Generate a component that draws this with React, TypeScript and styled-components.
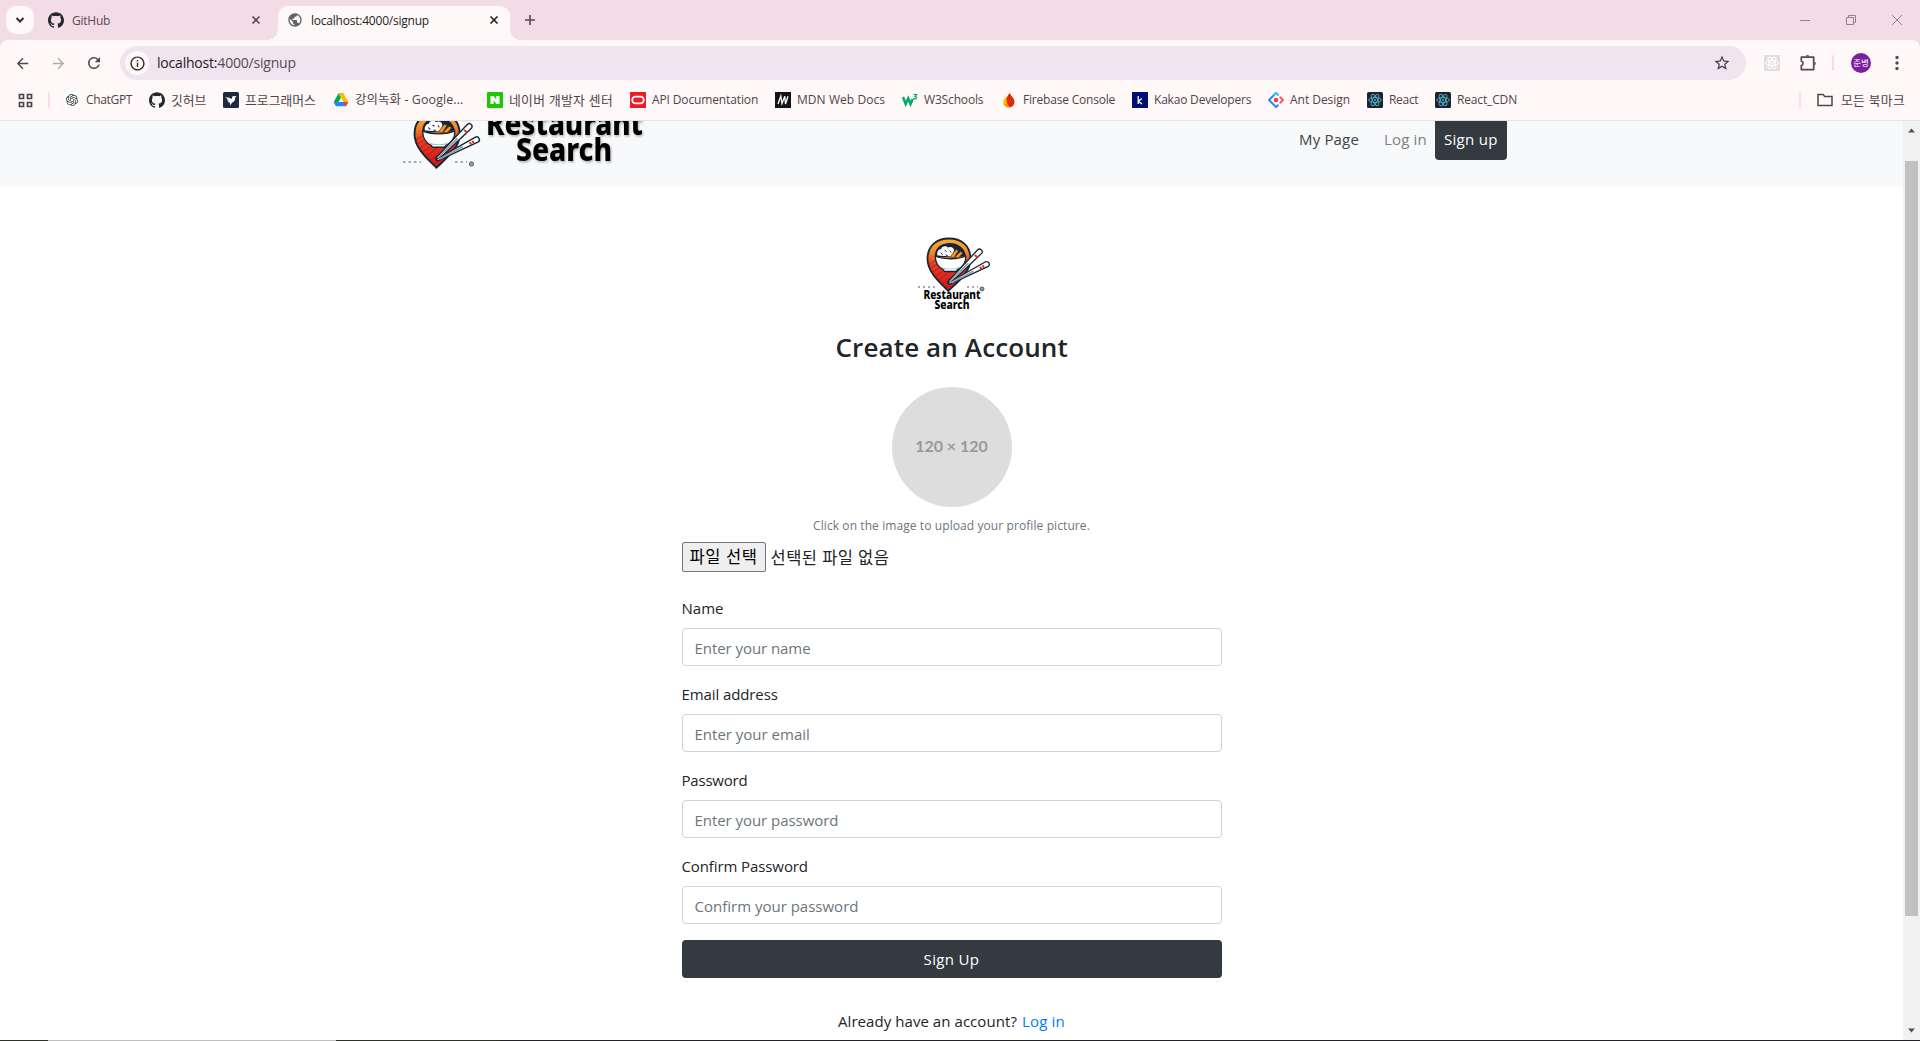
import React from "react";
import styled, { createGlobalStyle } from "styled-components";
import { SiGithub, SiOpenai } from "react-icons/si";
import { MdPublic, MdArrowBack, MdArrowForward, MdRefresh, MdInfoOutline, MdStarOutline } from "react-icons/md";

const ui = `"Open Sans", "Noto Sans CJK KR", sans-serif`;

const Global = createGlobalStyle`
  * { box-sizing: border-box; }
  body { margin: 0; overflow: hidden; background: #fff; font-family: ${ui}; }
`;

const Screen = styled.div`
  width: 1920px;
  height: 1041px;
  display: flex;
  flex-direction: column;
  overflow: hidden;
`;

const Text = styled.span<{ $w: number; $ls?: number; $size?: number }>`
  display: inline-block;
  flex: none;
  width: ${(p) => p.$w}px;
  letter-spacing: ${(p) => p.$ls ?? 0}px;
  ${(p) => (p.$size ? `font-size: ${p.$size}px;` : "")}
  white-space: nowrap;
`;

/* ---------- tab strip ---------- */

const TabStrip = styled.div`
  height: 40px;
  flex: none;
  display: flex;
  background: #f2dce5;
  padding: 6px 0 0 6px;
`;
const TabSearch = styled.div`
  width: 28px;
  height: 28px;
  border-radius: 10px;
  background: #fff8f8;
  display: grid;
  place-items: center;
`;
const Tab = styled.div<{ $active?: boolean; $w: number }>`
  position: relative;
  width: ${(p) => p.$w}px;
  height: 34px;
  padding: 0 9px 6px 9px;
  display: flex;
  align-items: center;
  font-size: 12px;
  color: ${(p) => (p.$active ? "#241d20" : "#5d4a53")};
  background: ${(p) => (p.$active ? "#fff8f8" : "transparent")};
  border-radius: 10px 10px 0 0;
  svg { flex: none; }
  & > span { margin-left: 8px; padding-top: 1px; }
  & > svg:last-of-type { margin-left: auto; }
`;
const Flare = styled.i<{ $side: "left" | "right" }>`
  position: absolute;
  bottom: 0;
  ${(p) => p.$side}: -10px;
  width: 10px;
  height: 10px;
  background: radial-gradient(circle at ${(p) => (p.$side === "left" ? "0 0" : "100% 0")}, transparent 9.5px, #fff8f8 10px);
`;
const NewTab = styled.div`
  width: 28px;
  height: 28px;
  margin-left: 6px;
  display: grid;
  place-items: center;
`;
const WindowButtons = styled.div`
  margin-left: auto;
  height: 28px;
  display: flex;
  svg { width: 46px; height: 28px; }
`;

/* ---------- toolbar ---------- */

const ToolbarBack = styled.div`
  flex: none;
  background: #f2dce5;
`;
const Toolbar = styled.div`
  height: 40px;
  border-radius: 8px 8px 0 0;
  background: #fff8f8;
  display: flex;
  align-items: center;
  padding: 6px 14px 0 13px;
  color: #5b4650;
`;
const NavIcon = styled.div<{ $dim?: boolean }>`
  width: 18px;
  height: 18px;
  margin-right: 18px;
  display: grid;
  place-items: center;
  color: ${(p) => (p.$dim ? "#b3a8ac" : "#5b4650")};
`;
const Omnibox = styled.div`
  width: 1626px;
  height: 34px;
  margin-left: -1px;
  border-radius: 17px;
  background: #f0e4ee;
  display: flex;
  align-items: center;
  padding: 0 15px 0 5px;
  font-size: 14px;
  color: #5a4b54;
  span { padding-bottom: 1px; }
  b { font-weight: 400; color: #1f1a1d; }
  & > svg { margin-left: auto; color: #463a41; }
`;
const SiteInfo = styled.div`
  width: 24px;
  height: 24px;
  border-radius: 50%;
  background: #fff8f8;
  display: grid;
  place-items: center;
  margin-right: 8px;
  color: #33292e;
`;
const Divider = styled.div`
  width: 2px;
  height: 16px;
  flex: none;
  border-radius: 1px;
  background: #ffd8ec;
`;
const Actions = styled.div`
  margin-left: 18px;
  flex: none;
  display: flex;
  align-items: center;
  & > * { flex: none; }
`;
const ExtIcon = styled.div`
  width: 16px;
  height: 16px;
  background: #e3dedf;
  margin-right: 19px;
  svg { display: block; }
`;
const Avatar = styled.div`
  width: 20px;
  height: 20px;
  border-radius: 50%;
  background: #7b1fa2;
  color: #fff;
  font-size: 8.5px;
  line-height: 19px;
  text-align: center;
  margin: 0 24px 0 17px;
`;

/* ---------- bookmarks ---------- */

const Bookmarks = styled.div`
  height: 41px;
  flex: none;
  border-bottom: 1px solid #f2dce5;
  background: #fff8f8;
  display: flex;
  align-items: center;
  padding: 0 15px 0 18px;
  font-size: 12px;
  line-height: 16px;
  color: #51434a;
`;
const Bookmark = styled.div`
  display: flex;
  align-items: center;
  gap: 6px;
  margin-right: 17px;
  svg { flex: none; display: block; }
`;
const Spacer = styled.div<{ $w?: number }>`
  ${(p) => (p.$w ? `width: ${p.$w}px; flex: none;` : "flex: 1;")}
`;

/* ---------- page ---------- */

const Viewport = styled.div`
  height: 919px;
  flex: none;
  display: flex;
`;
const Page = styled.div`
  width: 1903px;
  height: 919px;
  overflow: hidden;
  color: #212529;
  font-size: 15px;
`;
const Navbar = styled.div`
  height: 65px;
  background: #f8f9fa;
  padding: 0 396px 0 401px;
  display: flex;
  align-items: flex-start;
`;
const NavLinks = styled.div`
  margin-left: auto;
  display: flex;
  line-height: 24px;
`;
const NavLink = styled.a<{ $color: string; $gap: number }>`
  padding-top: 6px;
  color: ${(p) => p.$color};
  margin-right: ${(p) => p.$gap}px;
`;
const NavButton = styled.a`
  width: 72px;
  height: 39px;
  padding: 6px 0 0 9px;
  background: #343a40;
  color: #fff;
  border-radius: 0 0 4px 4px;
`;
const Form = styled.form`
  width: 540px;
  margin: 0 auto;
  padding-top: 50px;
  display: flex;
  flex-direction: column;
  align-items: center;
`;
const Title = styled.h2`
  margin: 14px 0 23px;
  font-size: 26px;
  line-height: 34px;
  font-weight: 600;
`;
const Picture = styled.div`
  width: 120px;
  height: 120px;
  border-radius: 50%;
  background: #ddd;
  color: #999;
  font: 700 16px/118px Lato, sans-serif;
  text-align: center;
`;
const Hint = styled.small`
  margin-top: 9px;
  font-size: 12px;
  line-height: 20px;
  color: #6c757d;
`;
const FileRow = styled.div`
  width: 100%;
  height: 30px;
  margin: 6px 0 24px;
  display: flex;
  align-items: center;
  gap: 5px;
  line-height: 27px;
`;
const FileButton = styled.div`
  width: 84px;
  height: 30px;
  padding-left: 7px;
  border: 1px solid #767676;
  border-radius: 2px;
  background: #efefef;
  color: #000;
`;
const Field = styled.div`
  width: 100%;
  height: 86px;
  display: flex;
  flex-direction: column;
`;
const FieldLabel = styled.label`
  height: 32px;
  line-height: 24px;
`;
const FieldBox = styled.div`
  height: 38px;
  border: 1px solid #ced4da;
  border-radius: 4px;
  padding: 0 12px;
  line-height: 38px;
  color: #6c757d;
`;
const Submit = styled.div`
  width: 100%;
  height: 38px;
  border-radius: 4px;
  background: #343a40;
  color: #fff;
  line-height: 38px;
  text-align: center;
`;
const Footer = styled.div`
  margin-top: 31px;
  line-height: 24px;
  display: flex;
  gap: 5px;
  a { color: #007bff; }
`;
const Scrollbar = styled.div`
  width: 17px;
  background: #f1f1f1;
  display: flex;
  flex-direction: column;
  align-items: center;
  padding: 6px 0;
  svg { display: block; flex: none; }
`;
const Thumb = styled.div`
  width: 13px;
  height: 755px;
  flex: none;
  margin: 28px 0 112px;
  background: #c1c1c1;
`;
const Edge = styled.div`
  height: 1px;
  background: linear-gradient(90deg, #2c3122 0 48px, #c0c0c0 48px 336px, #2c3122 336px 500px, #242428 500px);
`;

/* ---------- drawings ---------- */

const Cross = ({ color }: { color: string }) => (
  <svg width="14" height="14" viewBox="0 0 14 14" stroke={color} strokeWidth="1.6"><path d="M3.5 3.5l7 7M10.5 3.5l-7 7" /></svg>
);

const Pin = () => (
  <g strokeLinejoin="round" strokeLinecap="round">
    <path d="M31.300 54.500C24 47 10.500 36 10.500 22.500C10.500 9 20 2 32 2S53.500 9 53.500 22.500C53.500 36 40 46 31.300 54.500Z" fill="url(#pinFill)" stroke="#14263a" strokeWidth="1.800" />
    <g stroke="#a3120f" strokeWidth=".9" opacity=".65"><path d="M12 28l6-4M13 32l8-5M15 36l9-6M18 40l12-8M21 44l12-9M25 48l9-7M29 51l6-5" /></g>
    <path d="M18 21C17 14 22 7.500 29 7c9-2 19 3 20 13z" fill="#14263a" />
    <path d="M20.500 19c-1-3 .5-6 3.500-6.500 1-3 5-3.500 7-1.500 3-1.500 6 0 6 3l-2 6z" fill="#fff" />
    <path d="M24 16.500l1.200 1.300M28 14l1.200.8M29 18.500l1.400.6M33 14.500l.8 1.200" stroke="#14263a" strokeWidth="1" />
    <path d="M33.500 20l5.500-7 2.500 1.200-4.500 6.800zM38 20.500l5.500-5.500 2.300 1.500-4.300 5z" fill="#f7971c" stroke="#5b3212" strokeWidth=".7" />
    <path d="M18.300 19.500c7 3.500 23 3.800 30.500 0 .6 6.500-3.500 12-8.500 13.800l-1 1.700H27.500l-1-1.700c-5-2-8.500-7.300-8.200-13.800z" fill="#fff" stroke="#14263a" strokeWidth="1.300" />
    <path d="M23 29.500c5 3.300 15.500 3.500 21 0-2 2-3.500 3-4.700 3.300H27.500c-2-.6-3.500-2-4.500-3.300z" fill="#b9c1c6" />
    <path d="M30.800 45.300L60.700 13.300a2.700 2.700 0 0 1 4.200 3.300L33.500 46.500z" fill="#fff" stroke="#14263a" strokeWidth="1.300" />
    <path d="M30.600 46.800L68.600 25.300a2.700 2.700 0 0 1 2.700 4.600L33 47.700z" fill="#fff" stroke="#14263a" strokeWidth="1.300" />
    <path d="M33 45L51 27M35 46L56 34.800" stroke="#8d979e" strokeWidth="1.500" />
    <path d="M57.800 18.500l2.800 2.500M63 30.200l1.600 2.400M65.500 28.900l1.500 2.300" stroke="#d63a22" strokeWidth="2" strokeLinecap="butt" />
  </g>
);

const LogoDefs = () => (
  <defs>
    <linearGradient id="pinFill" x1="0" y1="0" x2="0" y2="1">
      <stop offset="0" stopColor="#f9b02c" /><stop offset=".25" stopColor="#f58a2a" /><stop offset=".5" stopColor="#ea3a22" /><stop offset="1" stopColor="#cc161a" />
    </linearGradient>
    <filter id="soft" x="-10%" y="-10%" width="120%" height="130%"><feDropShadow dx="1" dy="1.500" stdDeviation="1" floodColor="#000" floodOpacity=".3" /></filter>
  </defs>
);

const BigLogo = () => (
  <svg width="250" height="65" viewBox="401 121 250 65">
    <LogoDefs />
    <g transform="translate(403.500 110.500) scale(1.05)"><Pin /></g>
    <path d="M403 162h18M455 162h12" stroke="#555" strokeWidth="1.200" strokeDasharray="2.500 3" />
    <circle cx="471.500" cy="164" r="2.200" fill="#999" stroke="#555" strokeWidth=".8" />
    <g fontFamily="Noto Sans" fontWeight="800" fontSize="32" filter="url(#soft)">
      <text x="486" y="134.500" textLength="157" lengthAdjust="spacingAndGlyphs">Restaurant</text>
      <text x="516" y="161" textLength="96" lengthAdjust="spacingAndGlyphs">Search</text>
    </g>
  </svg>
);

const SmallLogo = () => (
  <svg width="80" height="80" viewBox="912 236 80 80">
    <g transform="translate(917 236.500)"><Pin /></g>
    <path d="M918 287h17M967 287h11" stroke="#555" strokeWidth="1.100" strokeDasharray="2 3" />
    <circle cx="982" cy="289" r="2" fill="#999" stroke="#444" strokeWidth=".8" />
    <g fontFamily="Noto Sans" fontWeight="800" fontSize="11.500">
      <text x="923.500" y="299" textLength="57" lengthAdjust="spacingAndGlyphs">Restaurant</text>
      <text x="934.500" y="309" textLength="35" lengthAdjust="spacingAndGlyphs">Search</text>
    </g>
  </svg>
);

const ReactOrbit = ({ color, width = 1 }: { color: string; width?: number }) => (
  <g fill="none" stroke={color} strokeWidth={width}>
    <ellipse cx="8" cy="8" rx="6.300" ry="2.500" />
    <ellipse cx="8" cy="8" rx="6.300" ry="2.500" transform="rotate(60 8 8)" />
    <ellipse cx="8" cy="8" rx="6.300" ry="2.500" transform="rotate(120 8 8)" />
    <circle cx="8" cy="8" r="1" fill={color} stroke="none" />
  </g>
);

const Box16 = ({ children }: { children: React.ReactNode }) => <svg width="16" height="16" viewBox="0 0 16 16">{children}</svg>;

const icons: Record<string, React.ReactNode> = {
  gpt: <Box16><rect width="16" height="16" rx="2" fill="#fff" /><g transform="translate(2 2)"><SiOpenai size={12} color="#333" /></g></Box16>,
  github: <SiGithub size={16} color="#24292f" />,
  prog: <Box16><rect width="16" height="16" rx="1.500" fill="#1e2a3e" /><path d="M2.200 5l3.800.8 2.500 1.200L9.500 4.300l4.300-.3-1.600 1.200c.3 3-1.200 4.800-3.200 5.300L7.300 13.500l-.5-3-2.300-.5 1.300-1.300-2-.8 1-.6z" fill="#fff" /></Box16>,
  drive: <Box16><path d="M5.500 1.500h5l-2.500 4.500z" fill="#188038" /><path d="M5.500 1.500L8 6 3.200 14.300 .700 10z" fill="#00ac47" /><path d="M10.500 1.500L15.300 10H10.300L5.500 1.500z" fill="#ffba00" /><path d="M.700 10h14.600l-2.500 4.300H3.200z" fill="#2684fc" /><path d="M10.300 10h5l-2.500 4.300z" fill="#ea4335" /><path d="M8 6l2.300 4H5.700z" fill="#fff8f8" /></Box16>,
  naver: <Box16><rect width="16" height="16" rx="1" fill="#1ec800" /><path d="M3.500 4h3.200l2.600 3.800V4h3.200v8H9.300L6.700 8.200V12H3.500z" fill="#fff" /></Box16>,
  oracle: <Box16><rect width="16" height="16" fill="#ee1b24" /><rect x="2.200" y="4.700" width="11.600" height="6.600" rx="3.300" fill="none" stroke="#fff" strokeWidth="1.800" /></Box16>,
  mdn: <Box16><rect width="16" height="16" fill="#15141a" /><path d="M3 12L5.800 4.200 7 11.500 9.800 4.200 10.500 12 13 4.200" stroke="#fff" strokeWidth="1.300" fill="none" /></Box16>,
  w3: <Box16><path d="M1 5l2.700 7L6.200 6.500 8.500 12l2.200-5" stroke="#04aa6d" strokeWidth="2.500" fill="none" /><path d="M11.500 2.500h3L13 4.300c2 0 2 2.500 0 2.500-.8 0-1.400-.3-1.600-.8" stroke="#04aa6d" strokeWidth="1.200" fill="none" /></Box16>,
  fire: <Box16><path d="M5.500 4.500C3 7 2 8.500 2.200 10.800 2.500 13.500 5 15.500 8 15.500V8z" fill="#ffc400" /><path d="M8.700 1C7 3 5.500 5 5.500 8.500c0 3 1.500 5 3 7 3-.5 5-2.500 5-5.500 0-3.500-3-5.500-4.800-9z" fill="#dd2c00" /><path d="M2.500 11.500c1 3 3.500 4 6 4-.5-2.500-3-4-6-4z" fill="#ff9100" /></Box16>,
  kakao: <Box16><rect width="16" height="16" fill="#000f78" /><path d="M6.200 4v8M9.800 6.500L6.500 9.300 10 12" stroke="#fff" strokeWidth="1.300" fill="none" /></Box16>,
  ant: <Box16><path d="M10.500 3.200L8 1 1 8l7 7 2.500-2.200" fill="none" stroke="#2f8bff" strokeWidth="2" strokeLinejoin="round" /><path d="M10.500 3.200L8 1 5.500 3.500" fill="none" stroke="#3cc8f4" strokeWidth="2" strokeLinejoin="round" /><path d="M12.300 5.200L15 8l-2.700 2.800" fill="none" stroke="#fa5a6a" strokeWidth="2" strokeLinecap="round" strokeLinejoin="round" /><circle cx="8" cy="8" r="2.200" fill="#f5384f" /></Box16>,
  react: <Box16><rect width="16" height="16" rx="1.500" fill="#20232a" /><ReactOrbit color="#4fb3cc" width={0.9} /></Box16>,
};

const bookmarks: { icon: string; label: string; w: number; ls: number; size?: number }[] = [
  { icon: "gpt", label: "ChatGPT", w: 46, ls: -0.34 },
  { icon: "github", label: "깃허브", w: 35, ls: 0, size: 12.8 },
  { icon: "prog", label: "프로그래머스", w: 71, ls: 0.05, size: 12.8 },
  { icon: "drive", label: "강의녹화 - Google...", w: 115, ls: 0.12, size: 12.4 },
  { icon: "naver", label: "네이버 개발자 센터", w: 104, ls: 0.32, size: 12.8 },
  { icon: "oracle", label: "API Documentation", w: 106, ls: -0.13 },
  { icon: "mdn", label: "MDN Web Docs", w: 88, ls: 0.06 },
  { icon: "w3", label: "W3Schools", w: 60, ls: -0.16 },
  { icon: "fire", label: "Firebase Console", w: 92, ls: -0.2 },
  { icon: "kakao", label: "Kakao Developers", w: 97, ls: -0.2 },
  { icon: "ant", label: "Ant Design", w: 60, ls: -0.03 },
  { icon: "react", label: "React", w: 29, ls: -0.3 },
  { icon: "react", label: "React_CDN", w: 60, ls: -0.15 },
];

const fields: { label: string; lw: number; lls: number; hint: string; hw: number; hls: number }[] = [
  { label: "Name", lw: 42, lls: 0, hint: "Enter your name", hw: 116, hls: -0.06 },
  { label: "Email address", lw: 97, lls: -0.1, hint: "Enter your email", hw: 115, hls: 0 },
  { label: "Password", lw: 66, lls: -0.2, hint: "Enter your password", hw: 144, hls: -0.05 },
  { label: "Confirm Password", lw: 127, lls: -0.1, hint: "Confirm your password", hw: 164, hls: 0 },
];

export default function App() {
  return (
    <Screen>
      <Global />
      <TabStrip>
        <TabSearch><svg width="10" height="8" viewBox="0 0 10 8" fill="none" stroke="#33292e" strokeWidth="2"><path d="M1.500 2L5 5.500 8.500 2" /></svg></TabSearch>
        <Spacer $w={5} />
        <Tab $w={233}>
          <SiGithub size={16} color="#24292f" />
          <Text $w={38} $ls={-0.25}>GitHub</Text>
          <Cross color="#5d4a53" />
        </Tab>
        <Spacer $w={6} />
        <Tab $w={232} $active>
          <Flare $side="left" /><Flare $side="right" />
          <MdPublic size={16} color="#5f6368" />
          <Text $w={118} $ls={-0.22}>localhost:4000/signup</Text>
          <Cross color="#241d20" />
        </Tab>
        <NewTab><svg width="12" height="12" viewBox="0 0 12 12" stroke="#5b4650" strokeWidth="1.600"><path d="M6 1v10M1 6h10" /></svg></NewTab>
        <WindowButtons>
          <svg viewBox="0 0 46 28" stroke="#93838b" fill="none"><path d="M18 14.500h10" /></svg>
          <svg viewBox="0 0 46 28" stroke="#93838b" fill="none"><path d="M18.500 11.500h7v7h-7zM20.500 11.500v-2h7v7h-2" /></svg>
          <svg viewBox="0 0 46 28" stroke="#93838b" fill="none"><path d="M18 9l10 10M28 9L18 19" /></svg>
        </WindowButtons>
      </TabStrip>
      <ToolbarBack>
        <Toolbar>
          <NavIcon><MdArrowBack size={17} /></NavIcon>
          <NavIcon $dim><MdArrowForward size={17} /></NavIcon>
          <NavIcon><MdRefresh size={18} /></NavIcon>
          <Omnibox>
            <SiteInfo><MdInfoOutline size={17} /></SiteInfo>
            <Text $w={139} $ls={-0.2}><b>localhost:</b>4000/signup</Text>
            <MdStarOutline size={18} />
          </Omnibox>
          <Actions>
            <ExtIcon><Box16><ReactOrbit color="#fff" /></Box16></ExtIcon>
            <svg width="18" height="18" viewBox="0 0 18 18" fill="none" stroke="#5b4650" strokeWidth="1.700" strokeLinejoin="round">
              <path d="M2.300 3.200h12.400v12.400H2.300v-4a2.400 2.400 0 0 0 0-4.600z" />
              <path d="M6.700 2.500a1.800 1.500 0 0 1 3.600 0zM15.300 7.700a1.500 1.800 0 0 1 0 3.600z" fill="#5b4650" stroke="none" />
            </svg>
            <Spacer $w={15} />
            <Divider />
            <Avatar>준병</Avatar>
            <svg width="4" height="16" fill="#5b4650"><circle cx="2" cy="2.500" r="1.700" /><circle cx="2" cy="8" r="1.700" /><circle cx="2" cy="13.500" r="1.700" /></svg>
          </Actions>
        </Toolbar>
      </ToolbarBack>
      <Bookmarks>
        <svg width="15" height="15" viewBox="0 0 15 15" fill="none" stroke="#51434a" strokeWidth="1.700"><path d="M1.500 1.500h4v4h-4zM9.500 1.500h4v4h-4zM1.500 9.500h4v4h-4zM9.500 9.500h4v4h-4z" /></svg>
        <Spacer $w={15} />
        <Divider />
        <Spacer $w={14} />
        {bookmarks.map((b) => (
          <Bookmark key={b.label}>{icons[b.icon]}<Text $w={b.w} $ls={b.ls} $size={b.size}>{b.label}</Text></Bookmark>
        ))}
        <Spacer />
        <Divider />
        <Spacer $w={16} />
        <svg width="16" height="14" viewBox="0 0 16 14" fill="none" stroke="#51434a" strokeWidth="1.500"><path d="M1 12.500v-11h5l1.800 2H15v9z" /></svg>
        <Spacer $w={8} />
        <Text $w={64} $ls={0.3} $size={12.8}>모든 북마크</Text>
      </Bookmarks>
      <Viewport>
        <Page>
          <Navbar>
            <BigLogo />
            <NavLinks>
              <NavLink $color="#414345" $gap={25}><Text $w={60} $ls={0.17}>My Page</Text></NavLink>
              <NavLink $color="#7f8081" $gap={8}><Text $w={43} $ls={0.18}>Log in</Text></NavLink>
              <NavButton><Text $w={54} $ls={0.3}>Sign up</Text></NavButton>
            </NavLinks>
          </Navbar>
          <Form>
            <SmallLogo />
            <Title><Text $w={232} $ls={0.12}>Create an Account</Text></Title>
            <Picture><Text $w={73}>120 × 120</Text></Picture>
            <Hint><Text $w={277} $ls={0.09}>Click on the image to upload your profile picture.</Text></Hint>
            <FileRow>
              <FileButton><Text $w={68} $ls={0.6} $size={16.5}>파일 선택</Text></FileButton>
              <Text $w={119} $ls={0.45} $size={16.5}>선택된 파일 없음</Text>
            </FileRow>
            {fields.map((f) => (
              <Field key={f.label}>
                <FieldLabel><Text $w={f.lw} $ls={f.lls}>{f.label}</Text></FieldLabel>
                <FieldBox><Text $w={f.hw} $ls={f.hls}>{f.hint}</Text></FieldBox>
              </Field>
            ))}
            <Submit><Text $w={56} $ls={0.35}>Sign Up</Text></Submit>
            <Footer><Text $w={179} $ls={0.06}>Already have an account?</Text><a><Text $w={43} $ls={0.18}>Log in</Text></a></Footer>
          </Form>
        </Page>
        <Scrollbar>
          <svg width="7" height="6" viewBox="0 0 7 6" fill="#505050"><path d="M0 5.500L3.500 1.500 7 5.500z" /></svg>
          <Thumb />
          <svg width="7" height="6" viewBox="0 0 7 6" fill="#505050"><path d="M0 .5L3.500 4.500 7 .5z" /></svg>
        </Scrollbar>
      </Viewport>
      <Edge />
    </Screen>
  );
}
